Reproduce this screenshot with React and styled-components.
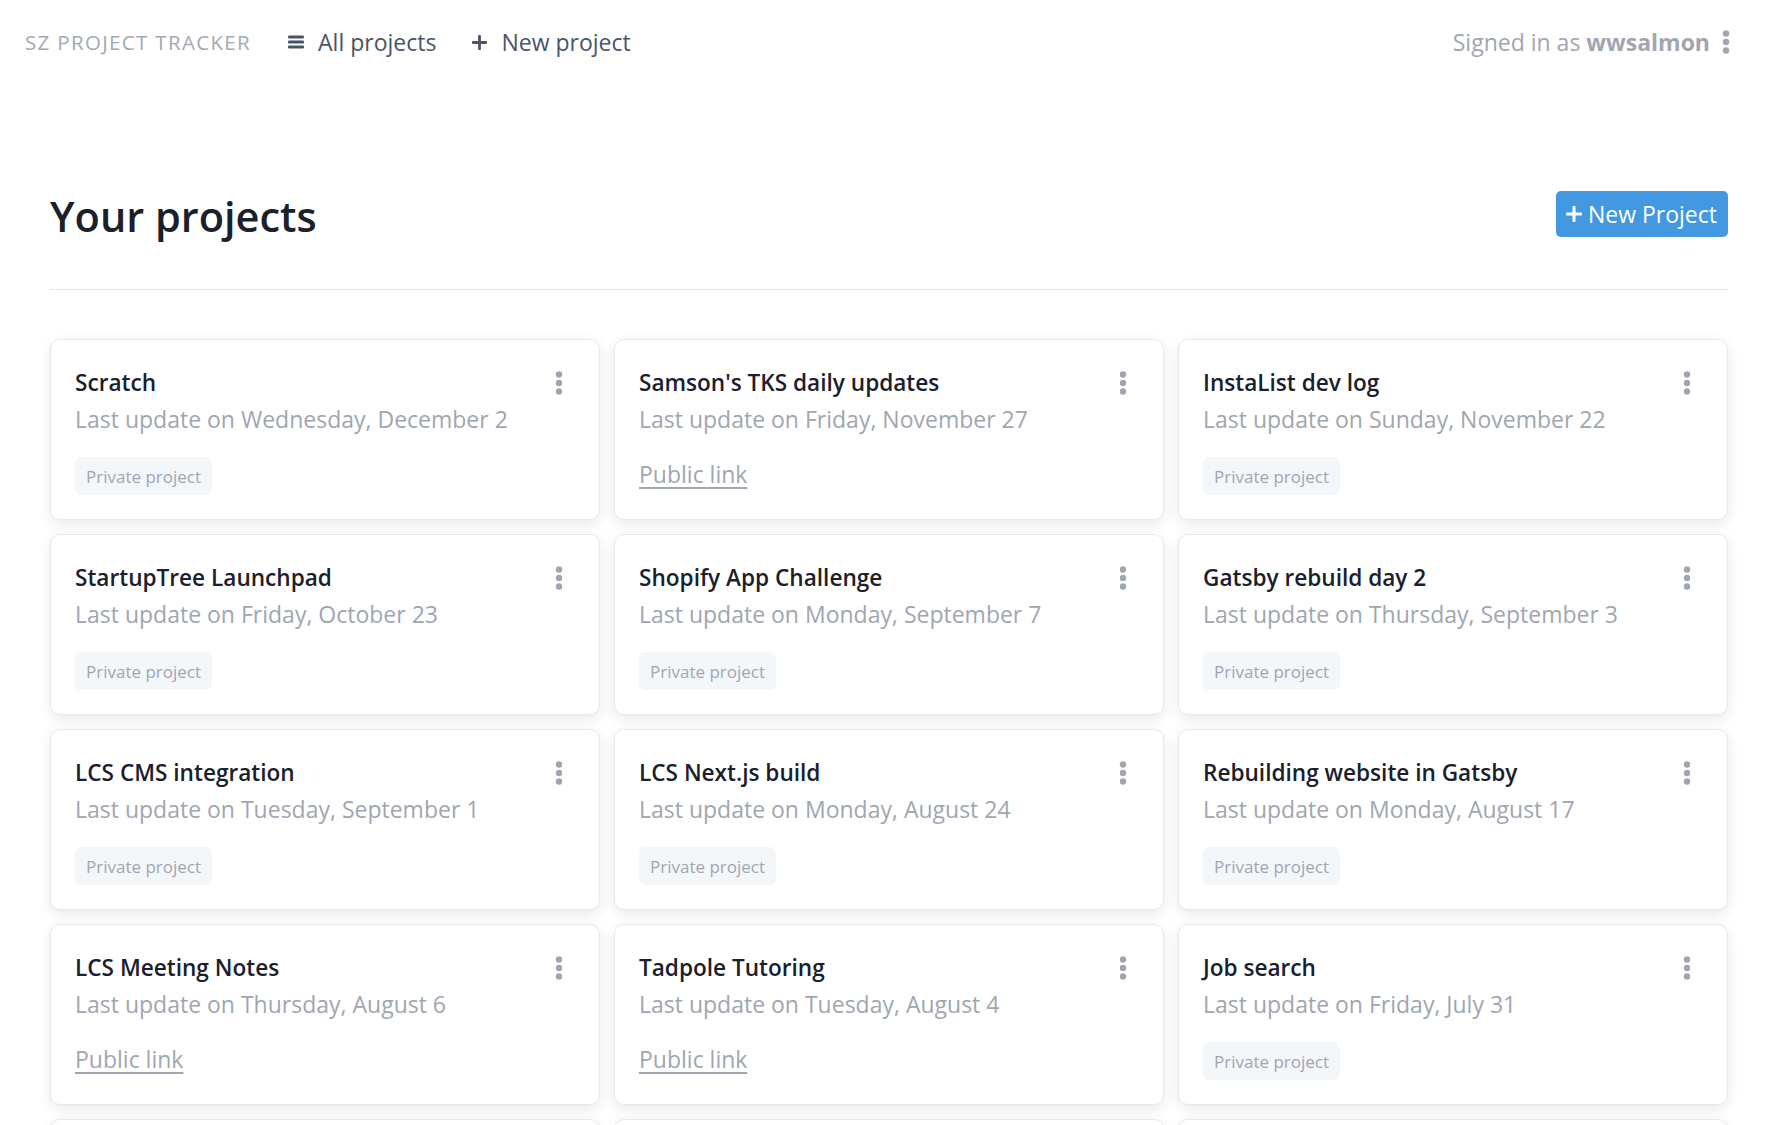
import React from "react";
import styled, { createGlobalStyle } from "styled-components";

const GlobalStyle = createGlobalStyle`
  body {
    margin: 0;
    background: #ffffff;
    font-family: "Open Sans", "Noto Sans", sans-serif;
    color: #1a202c;
  }
  * {
    box-sizing: border-box;
  }
`;

const Nav = styled.nav`
  height: 84px;
  padding: 0 50px 0 25px;
  display: flex;
  align-items: center;
`;

const Brand = styled.div`
  font-size: 20.5px;
  letter-spacing: 0.065em;
  text-transform: uppercase;
  color: #a3a9b4;
  margin-right: 37px;
`;

const NavLink = styled.a`
  display: flex;
  align-items: center;
  gap: 14px;
  font-size: 23px;
  color: #4a5568;
  text-decoration: none;
  margin-right: 36px;
  cursor: pointer;
`;

const UserBox = styled.div`
  margin-left: auto;
  display: flex;
  align-items: center;
  gap: 12px;
  font-size: 23px;
  color: #a0a6b1;
  & b {
    font-weight: 700;
  }
`;

const Main = styled.main`
  width: 1678px;
  margin-left: 50px;
  padding-top: 103px;
`;

const Header = styled.header`
  display: flex;
  align-items: center;
  justify-content: space-between;
  padding-bottom: 44px;
  border-bottom: 1px solid #e2e8f0;
`;

const Heading = styled.h1`
  margin: 0;
  font-size: 41.5px;
  line-height: 58px;
  font-weight: 600;
  color: #1a202c;
`;

const PrimaryButton = styled.button`
  height: 46px;
  margin-bottom: 5px;
  padding: 0 11px 0 10px;
  border: none;
  border-radius: 5px;
  background: #4299e1;
  color: #ffffff;
  font-family: inherit;
  font-size: 23px;
  display: flex;
  align-items: center;
  gap: 6px;
  cursor: pointer;
`;

const Grid = styled.section`
  margin-top: 49px;
  display: grid;
  grid-template-columns: repeat(3, 1fr);
  gap: 14px;
`;

const Card = styled.article`
  min-height: 181px;
  padding: 25px 24px 24px;
  background: #ffffff;
  border: 1px solid #e6eaf0;
  border-radius: 10px;
  box-shadow: 0 4px 14px rgba(0, 0, 0, 0.09);
`;

const CardTop = styled.div`
  display: flex;
  align-items: center;
  justify-content: space-between;
`;

const Title = styled.h2`
  margin: 0;
  font-size: 22.6px;
  line-height: 36px;
  font-weight: 600;
  color: #1a202c;
`;

const DateLine = styled.p`
  margin: 0;
  font-size: 23px;
  line-height: 36px;
  color: #a0a6b1;
`;

const Badge = styled.span`
  display: inline-flex;
  align-items: center;
  height: 38px;
  margin-top: 20px;
  padding: 0 11px;
  border-radius: 6px;
  background: #f4f7fa;
  color: #a0a6b1;
  font-size: 17px;
`;

const PublicLink = styled.a`
  display: inline-block;
  margin-top: 19px;
  font-size: 23px;
  line-height: 36px;
  color: #a0a6b1;
  text-decoration: underline;
  text-underline-offset: 4px;
  cursor: pointer;
`;

const KebabButton = styled.button`
  width: 32px;
  height: 32px;
  padding: 0;
  border: none;
  background: transparent;
  display: flex;
  align-items: center;
  justify-content: center;
  cursor: pointer;
`;

const Kebab = () => (
  <svg width="8" height="24" viewBox="0 0 8 24" fill="#a0a6b1">
    <circle cx="4" cy="3.5" r="3.2" />
    <circle cx="4" cy="12" r="3.2" />
    <circle cx="4" cy="20.5" r="3.2" />
  </svg>
);

const MenuIcon = () => (
  <svg width="16" height="16" viewBox="0 0 16 16" fill="#4a5568">
    <rect x="0" y="1.5" width="16" height="3" rx="1.2" />
    <rect x="0" y="6.5" width="16" height="3" rx="1.2" />
    <rect x="0" y="11.5" width="16" height="3" rx="1.2" />
  </svg>
);

const PlusIcon = ({ color = "#4a5568", size = 15 }) => (
  <svg width={size} height={size} viewBox="0 0 16 16" fill={color}>
    <rect x="6.5" y="0" width="3" height="16" rx="1" />
    <rect x="0" y="6.5" width="16" height="3" rx="1" />
  </svg>
);

const projects = [
  { name: "Scratch", date: "Wednesday, December 2", public: false },
  { name: "Samson's TKS daily updates", date: "Friday, November 27", public: true },
  { name: "InstaList dev log", date: "Sunday, November 22", public: false },
  { name: "StartupTree Launchpad", date: "Friday, October 23", public: false },
  { name: "Shopify App Challenge", date: "Monday, September 7", public: false },
  { name: "Gatsby rebuild day 2", date: "Thursday, September 3", public: false },
  { name: "LCS CMS integration", date: "Tuesday, September 1", public: false },
  { name: "LCS Next.js build", date: "Monday, August 24", public: false },
  { name: "Rebuilding website in Gatsby", date: "Monday, August 17", public: false },
  { name: "LCS Meeting Notes", date: "Thursday, August 6", public: true },
  { name: "Tadpole Tutoring", date: "Tuesday, August 4", public: true },
  { name: "Job search", date: "Friday, July 31", public: false },
  { name: "Gatsby rebuild", date: "Wednesday, July 29", public: false },
  { name: "Personal site", date: "Monday, July 27", public: false },
  { name: "Summer reading", date: "Friday, July 24", public: false },
];

const ProjectCard = ({ project }) => (
  <Card>
    <CardTop>
      <Title>{project.name}</Title>
      <KebabButton aria-label="Project options">
        <Kebab />
      </KebabButton>
    </CardTop>
    <DateLine>Last update on {project.date}</DateLine>
    {project.public ? (
      <PublicLink>Public link</PublicLink>
    ) : (
      <Badge>Private project</Badge>
    )}
  </Card>
);

export default function App() {
  return (
    <>
      <GlobalStyle />
      <Nav>
        <Brand>SZ Project Tracker</Brand>
        <NavLink>
          <MenuIcon />
          All projects
        </NavLink>
        <NavLink>
          <PlusIcon />
          New project
        </NavLink>
        <UserBox>
          <span>
            Signed in as <b>wwsalmon</b>
          </span>
          <Kebab />
        </UserBox>
      </Nav>
      <Main>
        <Header>
          <Heading>Your projects</Heading>
          <PrimaryButton>
            <PlusIcon color="#ffffff" size={16} />
            New Project
          </PrimaryButton>
        </Header>
        <Grid>
          {projects.map((p) => (
            <ProjectCard key={p.name} project={p} />
          ))}
        </Grid>
      </Main>
    </>
  );
}
